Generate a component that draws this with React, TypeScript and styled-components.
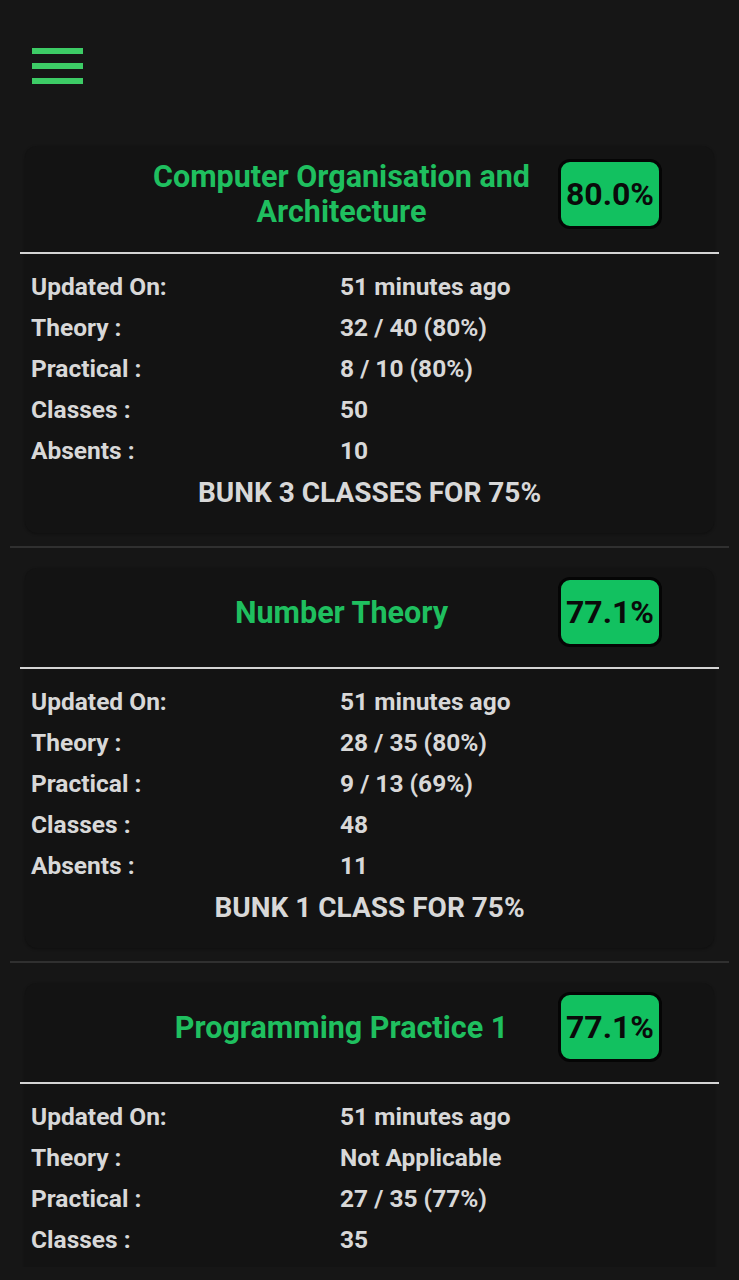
import React from "react";
import styled, { createGlobalStyle } from "styled-components";

const Global = createGlobalStyle`
  html, body { margin: 0; padding: 0; background: #161616; }
  body { font-family: Roboto, "Noto Sans", Arial, sans-serif; }
`;

const Page = styled.div`
  width: 739px;
  height: 1280px;
  background: #161616;
  display: flex;
  flex-direction: column;
  overflow: hidden;
`;

const TopBar = styled.div`
  padding: 48px 0 0 32px;
  height: 126px;
  box-sizing: border-box;
  flex-shrink: 0;
`;

const Hamburger = styled.div`
  width: 51px;
  display: flex;
  flex-direction: column;
  gap: 9px;
`;

const Bar = styled.span`
  display: block;
  height: 6px;
  background: #3dcc66;
`;

const List = styled.div`
  height: 1141px;
  flex-shrink: 0;
  overflow: hidden;
`;

const Item = styled.div`
  margin: 0 10px;
  padding: 20px 0 13px;
  border-bottom: 2px solid #303030;
`;

const Card = styled.div`
  margin: 0 15px;
  background: #131313;
  border-radius: 12px;
  box-shadow: 0 1px 3px rgba(0, 0, 0, 0.35);
  padding-bottom: 20px;
`;

const Header = styled.div<{ $tall?: boolean }>`
  display: flex;
  align-items: center;
  padding: ${(p) => (p.$tall ? "13px 52px 23px 110px" : "9px 52px 20px 110px")};
`;

const Title = styled.div`
  flex: 1;
  text-align: center;
  color: #1fbf5f;
  font-size: 30.5px;
  font-weight: 700;
  line-height: 35px;
  padding-right: 10px;
`;

const Badge = styled.div`
  width: 98px;
  height: 64px;
  box-sizing: content-box;
  border: 3px solid #050505;
  border-radius: 12px;
  background: #12c160;
  color: #0a0a0a;
  font-size: 32px;
  font-weight: 700;
  display: flex;
  align-items: center;
  justify-content: center;
`;

const Divider = styled.div`
  margin: 0 -5px;
  height: 2px;
  background: #d4d4d4;
`;

const Rows = styled.div`
  padding: 12px 6px 0;
`;

const Row = styled.div`
  display: grid;
  grid-template-columns: 309px 1fr;
  line-height: 41px;
  font-size: 24.5px;
  font-weight: 700;
  color: #d8d8d8;
`;

const Bunk = styled.div`
  text-align: center;
  font-size: 28px;
  font-weight: 700;
  line-height: 40px;
  color: #d8d8d8;
  padding-top: 2px;
`;

type Subject = {
  title: string;
  pct: string;
  theory: string;
  practical: string;
  classes: string;
  absents: string;
  bunk: string;
  tall?: boolean;
};

const subjects: Subject[] = [
  {
    title: "Computer Organisation and Architecture",
    pct: "80.0%",
    theory: "32 / 40 (80%)",
    practical: "8 / 10 (80%)",
    classes: "50",
    absents: "10",
    bunk: "BUNK 3 CLASSES FOR 75%",
    tall: true,
  },
  {
    title: "Number Theory",
    pct: "77.1%",
    theory: "28 / 35 (80%)",
    practical: "9 / 13 (69%)",
    classes: "48",
    absents: "11",
    bunk: "BUNK 1 CLASS FOR 75%",
  },
  {
    title: "Programming Practice 1",
    pct: "77.1%",
    theory: "Not Applicable",
    practical: "27 / 35 (77%)",
    classes: "35",
    absents: "8",
    bunk: "BUNK 0 CLASSES FOR 75%",
  },
];

export default function App() {
  return (
    <Page>
      <Global />
      <TopBar>
        <Hamburger>
          <Bar />
          <Bar />
          <Bar />
        </Hamburger>
      </TopBar>
      <List>
        {subjects.map((s) => (
          <Item key={s.title}>
            <Card>
              <Header $tall={s.tall}>
                <Title>{s.title}</Title>
                <Badge>{s.pct}</Badge>
              </Header>
              <Divider />
              <Rows>
                <Row><span>Updated On:</span><span>51 minutes ago</span></Row>
                <Row><span>Theory :</span><span>{s.theory}</span></Row>
                <Row><span>Practical :</span><span>{s.practical}</span></Row>
                <Row><span>Classes :</span><span>{s.classes}</span></Row>
                <Row><span>Absents :</span><span>{s.absents}</span></Row>
                <Bunk>{s.bunk}</Bunk>
              </Rows>
            </Card>
          </Item>
        ))}
      </List>
    </Page>
  );
}
